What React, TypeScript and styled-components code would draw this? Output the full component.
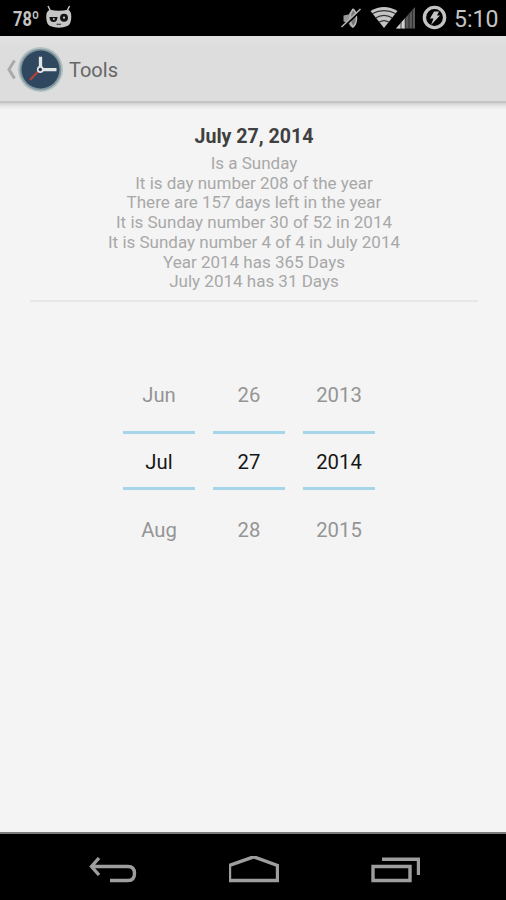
import React from 'react';
import styled, { createGlobalStyle } from 'styled-components';

const GlobalStyle = createGlobalStyle`
  * { box-sizing: border-box; }
  body { margin: 0; background: #f4f4f4; font-family: Roboto, "Liberation Sans", sans-serif; }
  svg { display: block; flex: none; }
`;

const Screen = styled.div`
  width: 506px;
  height: 900px;
  display: flex;
  flex-direction: column;
  background: #f4f4f4;
  overflow: hidden;
`;

const StatusBar = styled.header`
  height: 36px;
  flex: none;
  display: flex;
  align-items: flex-start;
  background: #000;
  color: #c4c4c4;
`;

const Temperature = styled.span`
  width: 30px;
  margin-left: 13px;
  padding-top: 8px;
  font-size: 21px;
  font-weight: 700;
  line-height: 23px;
  white-space: nowrap;
  transform: scaleX(0.78);
  transform-origin: left;
`;

const Spacer = styled.div`
  flex: 1;
`;

const Clock = styled.span`
  width: 52px;
  padding-top: 7px;
  font-size: 23.5px;
  line-height: 25px;
  white-space: nowrap;
  transform: scaleX(0.98);
  transform-origin: left;
`;

const ActionBar = styled.nav`
  height: 67px;
  flex: none;
  display: flex;
  align-items: center;
  background: linear-gradient(#e2e2e2, #dddddd 12px, #dddddd);
  border-bottom: 2px solid #c5c5c5;
`;

const BarShadow = styled.div`
  height: 7px;
  flex: none;
  background: linear-gradient(#d2d2d2, #e9e9e9 50%, #f4f4f4);
`;

const BarTitle = styled.h1`
  margin: 3px 0 0 5px;
  font-size: 20px;
  font-weight: 400;
  color: #666;
`;

const Main = styled.main`
  flex: 1;
  display: flex;
  flex-direction: column;
`;

const Summary = styled.section`
  width: 448px;
  height: 192px;
  margin-left: 30px;
  padding-top: 14px;
  text-align: center;
  border-bottom: 2px solid #e6e6e6;
`;

const DateTitle = styled.h2`
  margin: 0;
  font-size: 19.6px;
  line-height: 26px;
  font-weight: 700;
  color: #404040;
`;

const Facts = styled.div`
  margin-top: 4px;
`;

const Fact = styled.p`
  margin: 0;
  font-size: 17px;
  line-height: 19.7px;
  color: #a8a8a8;
`;

const Picker = styled.section`
  display: grid;
  grid-template-columns: repeat(3, 72px);
  column-gap: 18px;
  margin: 70px 0 0 123px;
`;

const Wheel = styled.div`
  display: flex;
  flex-direction: column;
  text-align: center;
  font-size: 20.3px;
`;

const Neighbour = styled.div<{ $after?: boolean }>`
  height: 59px;
  padding-top: ${(p) => (p.$after ? 28 : 11)}px;
  line-height: 24px;
  color: #959595;
`;

const Selected = styled.div`
  height: 59px;
  border-top: 3px solid #a5d5e8;
  border-bottom: 3px solid #a5d5e8;
  line-height: 56px;
  color: #161616;
`;

const NavBar = styled.footer`
  height: 68px;
  flex: none;
  display: flex;
  align-items: flex-start;
  padding: 22px 0 0 88px;
  border-top: 2px solid #7b7b7b;
  background: #000;
`;

const NavIcon = styled.svg`
  width: 50px;
  height: 30px;
  margin-right: 91px;
  fill: none;
  stroke: #9e9e9e;
  stroke-width: 3.4;
`;

const facts = [
  'Is a Sunday',
  'It is day number 208 of the year',
  'There are 157 days left in the year',
  'It is Sunday number 30 of 52 in 2014',
  'It is Sunday number 4 of 4 in July 2014',
  'Year 2014 has 365 Days',
  'July 2014 has 31 Days',
];

const wheels = [
  ['Jun', 'Jul', 'Aug'],
  ['26', '27', '28'],
  ['2013', '2014', '2015'],
];

const RobotIcon = () => (
  <svg width="30" height="36" viewBox="44 0 30 36">
    <path d="M49 6l2.5 5M70.5 6l-2.5 5" stroke="#c4c4c4" strokeWidth="1.5" />
    <path d="M51 9.8Q60 11.5 69 9.8Q72.5 11 72.3 17Q72.2 24 68.5 26Q60 29.5 51 26Q47.3 24 47.2 17Q47 11 51 9.8Z" fill="#c6c6c6" />
    <path d="M50.5 17h8q0 5-4 5t-4-5z" fill="#151515" />
    <circle cx="65" cy="17.7" r="4" fill="#151515" />
    <circle cx="54.8" cy="19" r="1" fill="#c6c6c6" />
    <circle cx="65" cy="17.7" r="1.1" fill="#c6c6c6" />
    <path d="M57.5 24.3h4.5" stroke="#444" strokeWidth="1.2" />
  </svg>
);

const StatusIcons = () => (
  <svg width="114" height="36" viewBox="340 0 114 36">
    <path d="M343.5 15.5l5-1L353 8.5q3.5 2 3.5 9.5t-3.5 9.5q-2.5 0-4.5-4.5l-5-1.5z" fill="#999" />
    <path d="M353 9q3.5 3 3.5 9t-3.5 9q-3-4-3-9t3-9" fill="#777" stroke="#bbb" strokeWidth="1.5" />
    <path d="M342.3 28.3L361 10.3" stroke="#000" strokeWidth="2" />
    <path d="M341.5 27L360.5 9" stroke="#b4b4b4" strokeWidth="1.6" />
    <path d="M370.5 11Q384 3 397.5 11L384 28Z" fill="#c4c4c4" />
    <path d="M372 13.8Q384 7.5 396 13.8M375.5 18Q384 12.8 392.5 18M379 22.3Q384 19 389 22.3" fill="none" stroke="#333" strokeWidth="1.2" />
    <path d="M396 28.5L415 7V28.5Z" fill="#595959" />
    <path d="M396 28.5L405 18.3V28.5Z" fill="#d0d0d0" />
    <path d="M401 20v9M405.2 17v12M409 13v16M412.5 9v20" stroke="#242424" strokeWidth=".8" />
    <circle cx="434.5" cy="17.5" r="10.1" fill="none" stroke="#c4c4c4" strokeWidth="3.4" />
    <path d="M434 11.5h5l-2 4h3L431 25l2.5-6.5H430Z" fill="#c4c4c4" />
  </svg>
);

const ClockLogo = () => (
  <svg width="64" height="64" viewBox="0 37 64 64">
    <path d="M14.5 60.5L9 69.5L14.5 78.5" fill="none" stroke="#aaa" strokeWidth="3" />
    <circle cx="40.5" cy="69.5" r="22.5" fill="#b3c1c2" />
    <circle cx="40.5" cy="69.5" r="20.8" fill="#81969e" />
    <circle cx="40.5" cy="69.5" r="19" fill="#30485f" />
    <path d="M40 69.5L30 80" stroke="#b44238" strokeWidth="2.2" />
    <path d="M40.5 70V56.8M40.5 69.7H56.5" stroke="#e2e5e6" strokeWidth="3.3" />
    <circle cx="40.3" cy="69.5" r="3.4" fill="#e2e5e6" />
    <circle cx="40.3" cy="69.5" r="1.7" fill="#26394b" />
  </svg>
);

export default function App() {
  return (
    <Screen>
      <GlobalStyle />
      <StatusBar>
        <Temperature>78º</Temperature>
        <RobotIcon />
        <Spacer />
        <StatusIcons />
        <Clock>5:10</Clock>
      </StatusBar>
      <ActionBar>
        <ClockLogo />
        <BarTitle>Tools</BarTitle>
      </ActionBar>
      <BarShadow />
      <Main>
        <Summary>
          <DateTitle>July 27, 2014</DateTitle>
          <Facts>
            {facts.map((fact) => <Fact key={fact}>{fact}</Fact>)}
          </Facts>
        </Summary>
        <Picker>
          {wheels.map(([before, current, after]) => (
            <Wheel key={current}>
              <Neighbour>{before}</Neighbour>
              <Selected>{current}</Selected>
              <Neighbour $after>{after}</Neighbour>
            </Wheel>
          ))}
        </Picker>
      </Main>
      <NavBar>
        <NavIcon viewBox="88 855 50 30">
          <path d="M99 857L91.5 865.5L99 874M92 865.5H128Q134.5 865.5 134.5 872.5Q134.5 879.5 128 879.5H110" />
        </NavIcon>
        <NavIcon viewBox="229 855 50 30">
          <path d="M229.5 879.5V864.5L253.7 855.8L277.5 864.5V879.5Z" />
        </NavIcon>
        <NavIcon viewBox="370 855 50 30">
          <path d="M373 865.5H410V879.5H373ZM382 858.3H418.5V874" />
        </NavIcon>
      </NavBar>
    </Screen>
  );
}
